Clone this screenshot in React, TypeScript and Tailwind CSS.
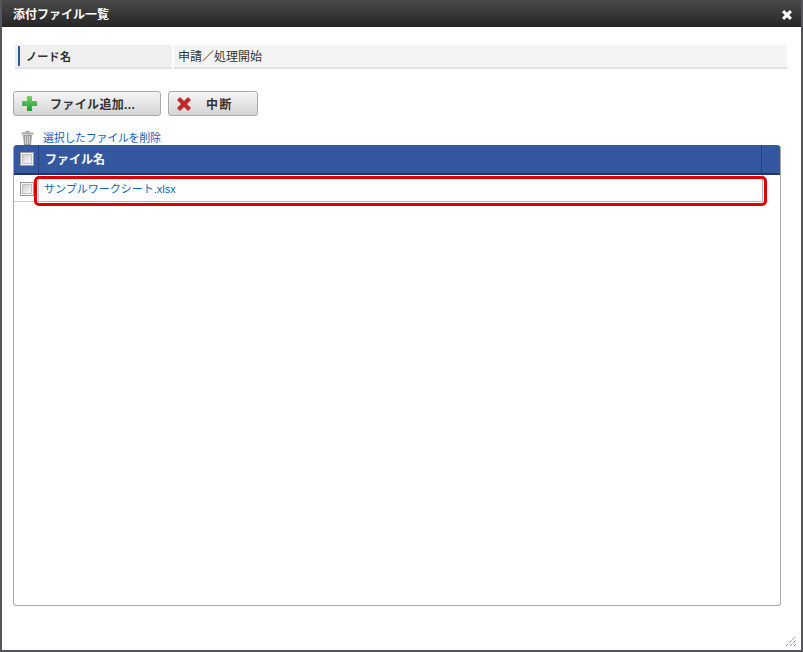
const FONT = "font-['Liberation_Sans','Noto_Sans_CJK_JP',sans-serif]";

function Checkbox() {
  return (
    <div className="flex h-[14px] w-[14px] items-center justify-center border border-[#9a9a9a] bg-[#f4f4f4]">
      <div className="h-[10px] w-[10px] border border-[#c2c2c2] bg-gradient-to-br from-[#d0d0d0] to-[#f8f8f8]" />
    </div>
  );
}

function TrashIcon() {
  return (
    <svg width="13" height="14" viewBox="0 0 13 14">
      <rect x="4.5" y="0" width="4" height="1.5" fill="#9a9a9a" />
      <rect x="0.5" y="1.5" width="12" height="2" fill="#a8a8a8" />
      <path d="M2 4h9l-1 10H3z" fill="#9b9b9b" />
      <path d="M4.5 5v8M6.5 5v8M8.5 5v8" stroke="#d6d6d6" strokeWidth="1" />
    </svg>
  );
}

function PlusIcon() {
  return (
    <svg width="15" height="15" viewBox="0 0 15 15">
      <defs>
        <linearGradient id="plusGreen" x1="0" y1="0" x2="0" y2="1">
          <stop offset="0" stopColor="#6fd96f" />
          <stop offset="1" stopColor="#1f9a35" />
        </linearGradient>
      </defs>
      <path d="M5 0h5v5h5v5h-5v5H5v-5H0V5h5z" fill="url(#plusGreen)" />
    </svg>
  );
}

function CrossIcon({ color, size }: { color: string; size: number }) {
  return (
    <svg width={size} height={size} viewBox="0 0 14 14">
      <path d="M3 0l4 4 4-4 3 3-4 4 4 4-3 3-4-4-4 4-3-3 4-4-4-4z" fill={color} />
    </svg>
  );
}

export default function App() {
  return (
    <div className={`${FONT} h-[652px] w-[803px] overflow-hidden bg-white text-xs text-[#333]`}>
      <div className="relative flex h-[652px] w-[803px] flex-col border-x-2 border-b-2 border-x-[#55555c] border-b-[#55555c] bg-white">
        {/* Title bar */}
        <div className="flex h-[27px] shrink-0 items-center justify-between bg-gradient-to-b from-[#4a4a4a] to-[#262626] pl-[11px] pr-[9px]">
          <span className="pt-[2px] text-xs font-bold text-white">添付ファイル一覧</span>
          <div className="mt-[2px]">
            <CrossIcon color="#ffffff" size={10} />
          </div>
        </div>

        <div className="flex min-h-0 flex-1 flex-col pl-[11px] pr-[14px]">
          {/* Node name */}
          <div className="mt-[18px] flex h-[24px] gap-[2px] pl-[2px]">
            <div className="flex w-[157px] items-center border-b-2 border-b-[#e2e2e2] bg-[#f0f0f0] pl-[3px]">
              <div className="flex h-[20px] items-center border-l-2 border-l-[#34589f] pl-[6px] pt-[2px] text-[11px] font-bold tracking-[0.3px]">ノード名</div>
            </div>
            <div className="flex flex-1 items-center border-b-2 border-b-[#e2e2e2] bg-[#f4f4f4] pl-[4px] pt-[1px]">申請／処理開始</div>
          </div>

          {/* Buttons */}
          <div className="mt-[22px] flex gap-[7px]">
            <button className="flex h-[25px] w-[148px] items-center rounded-[3px] border border-[#a9a9a9] bg-gradient-to-b from-[#f6f6f6] to-[#d4d4d4] pl-[8px] font-bold">
              <PlusIcon />
              <span className="ml-[13px] pt-[2px] tracking-[0.35px]">ファイル追加...</span>
            </button>
            <button className="flex h-[25px] w-[90px] items-center rounded-[3px] border border-[#a9a9a9] bg-gradient-to-b from-[#f6f6f6] to-[#d4d4d4] pl-[8px] font-bold">
              <CrossIcon color="#c22a2a" size={14} />
              <span className="ml-[15px] pt-[2px] tracking-[1.5px]">中断</span>
            </button>
          </div>

          {/* Delete link */}
          <div className="mt-[14px] flex h-[15px] items-center pl-[8px]">
            <TrashIcon />
            <span className="ml-[9px] pt-[2px] text-[11px] tracking-[-0.3px] text-[#0f5fc0]">選択したファイルを削除</span>
          </div>

          {/* File table */}
          <div className="relative h-[461px] w-[768px] rounded-[3px] border border-t-0 border-[#a9a9a9]">
            <div className="flex h-[30px] rounded-t-[3px] border-b-2 border-b-[#1f3768] bg-[#34589f] font-bold text-white">
              <div className="flex w-[25px] items-center justify-center border-r border-r-[#22407c] pl-[2px]">
                <Checkbox />
              </div>
              <div className="flex flex-1 items-center border-r border-r-[#22407c] pl-[6px] pt-[2px]">ファイル名</div>
              <div className="w-[18px]" />
            </div>
            <div className="flex h-[27px]">
              <div className="flex w-[25px] items-center justify-center border-r border-b border-[#c8c8c8] pl-[1px] pt-[2px]">
                <Checkbox />
              </div>
              <div className="flex w-[724px] items-center border-r border-b border-[#b5b5b5] pl-[5px] pt-[2px] text-[11px] text-[#0f5fc0]">
                サンプルワークシート.xlsx
              </div>
            </div>
            {/* Red highlight */}
            <div className="absolute left-[20px] top-[31px] h-[30px] w-[733px] rounded-[5px] border-[3px] border-[#dc0000]" />
          </div>
        </div>

        {/* Resize grip */}
        <svg className="absolute bottom-[3px] right-[4px]" width="12" height="12" viewBox="0 0 12 12">
          <path d="M1 11L11 1M5 11L11 5M9 11L11 9" stroke="#1d5a96" strokeWidth="1" strokeDasharray="1 1" />
        </svg>
      </div>
    </div>
  );
}
